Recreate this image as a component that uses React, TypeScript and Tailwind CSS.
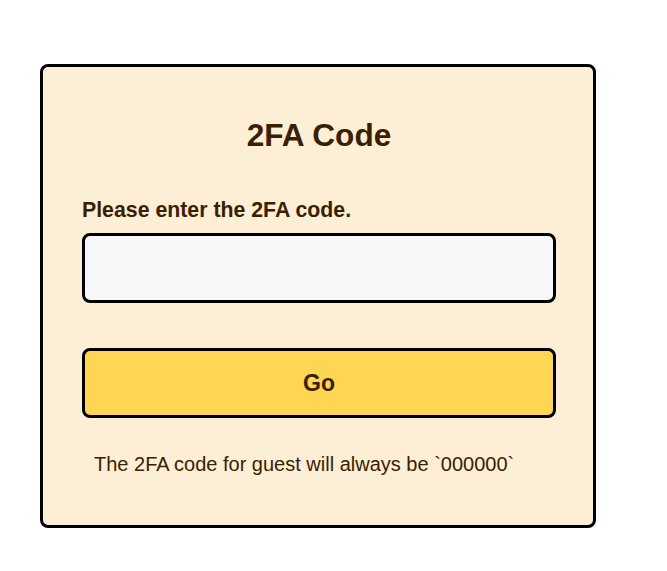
import React from "react";

export default function App() {
  return (
    <div className="min-h-[571px] w-[667px] bg-white pt-[64px] pl-[40px]" style={{ fontFamily: '"Liberation Sans", Arial, sans-serif' }}>
      <div className="w-[556px] h-[464px] rounded-[8px] border-[3px] border-black bg-[#fcefd6] pt-[50px] pl-[39px] text-[#3b2000]">
        <h1 className="w-[474px] text-center text-[31.6px] leading-[36px] font-bold">2FA Code</h1>
        <div className="mt-[45px] text-[21.3px] leading-[24px] font-bold">Please enter the 2FA code.</div>
        <input
          type="text"
          className="mt-[11px] block w-[474px] h-[70px] rounded-[8px] border-[3px] border-black bg-[#f7f7f9] outline-none px-3 text-[20px]"
        />
        <button className="mt-[45px] block w-[474px] h-[70px] rounded-[8px] border-[3px] border-black bg-[#ffd654] text-[23px] font-bold text-[#3b2000]">
          Go
        </button>
        <p className="mt-[35px] pl-[12px] text-[20px] leading-[23px]">The 2FA code for guest will always be `000000`</p>
      </div>
    </div>
  );
}
